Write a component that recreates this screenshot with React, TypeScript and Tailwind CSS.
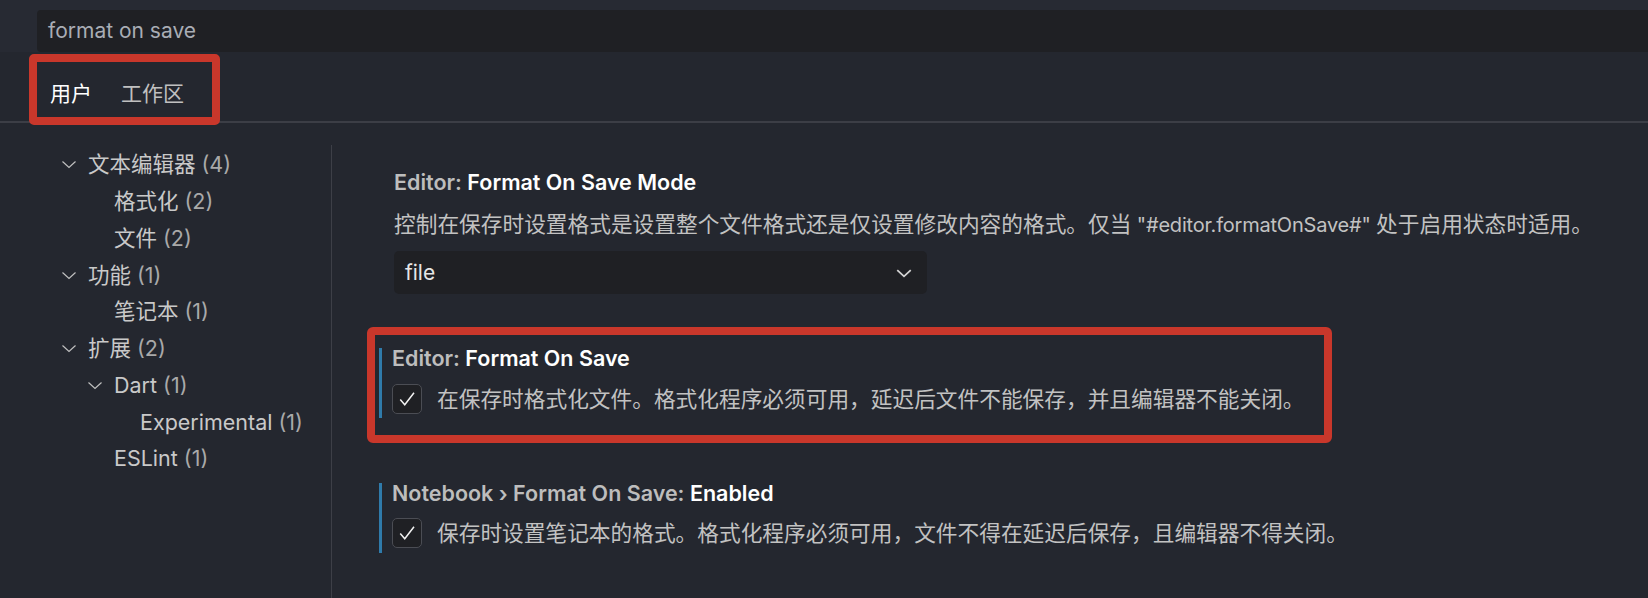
import { useState } from 'react';

const font = { fontFamily: 'Inter, "Noto Sans CJK SC", sans-serif' };

type TreeItem = { label: string; count: number; level: number; open?: boolean };

const tree: TreeItem[] = [
    { label: '文本编辑器', count: 4, level: 0, open: true },
    { label: '格式化', count: 2, level: 1 },
    { label: '文件', count: 2, level: 1 },
    { label: '功能', count: 1, level: 0, open: true },
    { label: '笔记本', count: 1, level: 1 },
    { label: '扩展', count: 2, level: 0, open: true },
    { label: 'Dart', count: 1, level: 1, open: true },
    { label: 'Experimental', count: 1, level: 2 },
    { label: 'ESLint', count: 1, level: 1 },
];

function Chevron({ className }: { className?: string }) {
    return (
        <svg viewBox="0 0 16 16" className={className} fill="none" stroke="currentColor" strokeWidth="1.2">
            <path d="M1.5 5.5 L8 11.5 L14.5 5.5" />
        </svg>
    );
}

function Check() {
    return (
        <svg viewBox="0 0 16 16" className="w-[20px] h-[20px]" fill="none" stroke="#f2f2f2" strokeWidth="1.2">
            <path d="M2.6 8.4 L6.2 12.6 L13.6 3" />
        </svg>
    );
}

function Checkbox({ checked }: { checked: boolean }) {
    return (
        <div className="w-[30px] h-[30px] shrink-0 rounded-[5px] border border-[#4b4d54] bg-[#1f2024] flex items-center justify-center">
            {checked && <Check />}
        </div>
    );
}

export default function App() {
    const [tab, setTab] = useState('user');
    const [formatOnSave, setFormatOnSave] = useState(true);
    const [notebookFormat, setNotebookFormat] = useState(true);

    return (
        <div className="w-[1648px] h-[598px] overflow-hidden bg-[#24272f] text-[#c4c4c4]" style={font}>
            <div className="pt-[10px] pl-[37px] bg-[#272a33]">
                <div className="h-[42px] bg-[#1f2024] rounded-l-[4px] flex items-center pl-[11px] text-[21px] text-[#a9adb5]">
                    format on save
                </div>
            </div>

            <div className="h-[71px] flex items-end border-b-2 border-[#3c3e46]">
                <div className="ml-[29px] -mb-[4px] w-[191px] h-[71px] border-[8px] border-[#c9372b] rounded-[5px] flex items-center gap-[29px] pl-[13px] pt-[9px] text-[21px]">
                    <button className={tab === 'user' ? 'text-white' : 'text-[#c0c0c0]'} onClick={() => setTab('user')}>
                        用户
                    </button>
                    <button className={tab === 'workspace' ? 'text-white' : 'text-[#c0c0c0]'} onClick={() => setTab('workspace')}>
                        工作区
                    </button>
                </div>
            </div>

            <div className="mt-[22px] flex h-[460px]">
                <div className="w-[332px] shrink-0 border-r border-[#3d3f47] pt-[1px]">
                    {tree.map((item) => (
                        <div
                            key={item.label}
                            className="h-[36.75px] flex items-center text-[21.5px]"
                            style={{ paddingLeft: 58 + item.level * 26 }}
                        >
                            <div className="w-[30px] shrink-0">
                                {item.open && <Chevron className="w-[16px] h-[16px] text-[#c0c0c0] ml-[3px]" />}
                            </div>
                            <span className="text-[#c9c9c9]">{item.label}</span>
                            <span className="ml-[6px] text-[#a9a9a9]">({item.count})</span>
                        </div>
                    ))}
                </div>

                <div className="pl-[35px] pt-[4px] flex flex-col">
                    <div className="border-[8px] border-transparent pt-[15px] pl-[19px] pb-[25px]">
                        <div className="text-[21.5px] leading-[20px] font-semibold">
                            <span className="text-[#bdbdbd]">Editor: </span>
                            <span className="text-white">Format On Save Mode</span>
                        </div>
                        <div className="mt-[22px] text-[21.7px] leading-[20px] text-[#c2c2c2] whitespace-nowrap">
                            控制在保存时设置格式是设置整个文件格式还是仅设置修改内容的格式。仅当
                            <span className="text-[20px] tracking-[-0.01em]"> "#editor.formatOnSave#" </span>
                            处于启用状态时适用。
                        </div>
                        <div className="mt-[16px] w-[533px] h-[43px] rounded-[5px] bg-[#1f2024] flex items-center justify-between pl-[11px] pr-[14px] text-[21px] text-[#e6e6e6]">
                            <span>file</span>
                            <svg viewBox="0 0 16 16" className="w-[18px] h-[18px]" fill="none" stroke="#d4d4d4" strokeWidth="1.6">
                                <path d="M2 5.5 L8 11 L14 5.5" />
                            </svg>
                        </div>
                    </div>

                    <div className="w-[965px] border-[8px] border-[#c9372b] rounded-[6px] pt-[13px] pl-[4px] pb-[17px]">
                        <div className="border-l-[3px] border-[#2f7bab] pl-[10px] pb-[2px]">
                            <div className="text-[21.5px] leading-[20px] font-semibold">
                                <span className="text-[#bdbdbd]">Editor: </span>
                                <span className="text-white">Format On Save</span>
                            </div>
                            <div className="mt-[15px] flex items-center gap-[15px] cursor-pointer" onClick={() => setFormatOnSave(!formatOnSave)}>
                                <Checkbox checked={formatOnSave} />
                                <span className="text-[21.7px] text-[#c2c2c2] whitespace-nowrap">
                                    在保存时格式化文件。格式化程序必须可用，延迟后文件不能保存，并且编辑器不能关闭。
                                </span>
                            </div>
                        </div>
                    </div>

                    <div className="mt-[17px] border-[8px] border-transparent pt-[15px] pl-[4px]">
                        <div className="border-l-[3px] border-[#2f7bab] pl-[10px] pb-[4px]">
                            <div className="text-[21.5px] leading-[20px] font-semibold">
                                <span className="text-[#bdbdbd]">Notebook › Format On Save: </span>
                                <span className="text-white">Enabled</span>
                            </div>
                            <div className="mt-[14px] flex items-center gap-[15px] cursor-pointer" onClick={() => setNotebookFormat(!notebookFormat)}>
                                <Checkbox checked={notebookFormat} />
                                <span className="text-[21.7px] text-[#c2c2c2] whitespace-nowrap">
                                    保存时设置笔记本的格式。格式化程序必须可用，文件不得在延迟后保存，且编辑器不得关闭。
                                </span>
                            </div>
                        </div>
                    </div>
                </div>
            </div>
        </div>
    );
}
